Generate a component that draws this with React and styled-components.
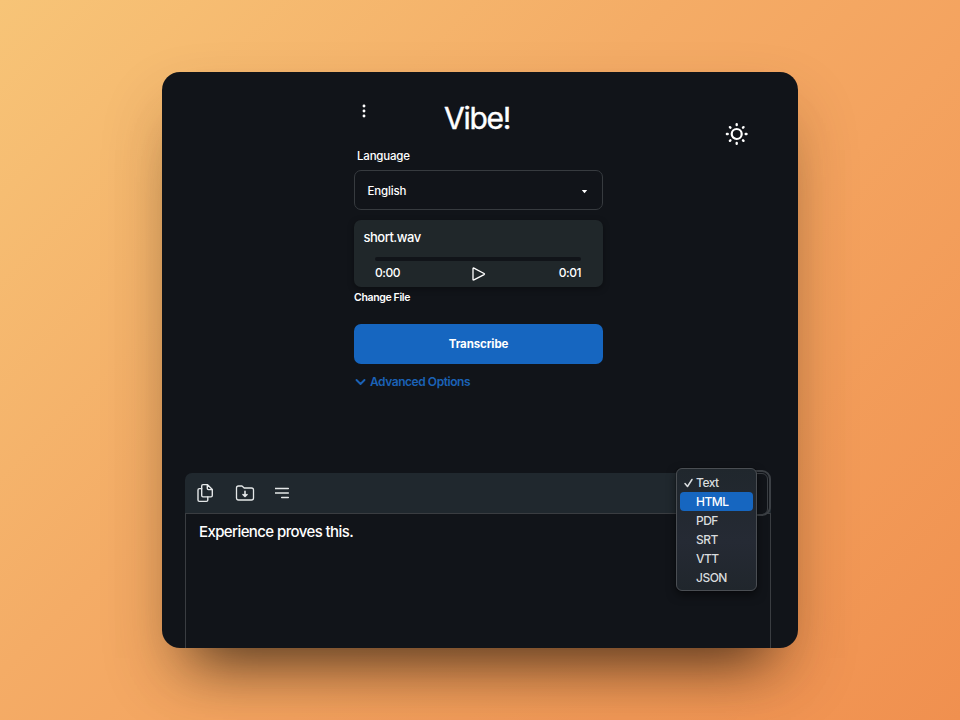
import React from "react";
import styled, { createGlobalStyle } from "styled-components";

const GlobalStyle = createGlobalStyle`
  * { box-sizing: border-box; }
  body { margin: 0; font-family: Inter, "Liberation Sans", sans-serif; color: #fff; }
  button { font: inherit; border: 0; background: none; padding: 0; color: inherit; }
`;

const Backdrop = styled.div`
  width: 960px;
  height: 720px;
  display: grid;
  place-items: center;
  overflow: hidden;
  background: linear-gradient(135deg, #f7c477 0%, #f4ac66 40%, #f4a35f 60%, #f0904f 100%);
`;

const Window = styled.main`
  position: relative;
  width: 636px;
  height: 576px;
  padding: 0 27px 0 23px;
  display: flex;
  flex-direction: column;
  border-radius: 18px;
  background: #111419;
  overflow: hidden;
`;

const WindowShadow = styled.div`
  border-radius: 18px;
  box-shadow: 0 44px 54px -34px rgba(0, 0, 0, 0.62), 0 32px 64px rgba(60, 25, 0, 0.19);
`;

const Form = styled.section`
  width: 249px;
  height: 401px;
  margin-left: 169px;
  padding-top: 28px;
  display: flex;
  flex-direction: column;
  flex: none;
`;

const Heading = styled.header`
  display: grid;
  grid-template-columns: 20px 1fr 23px;
  height: 46px;
`;

const Title = styled.h1`
  margin: 0;
  text-align: center;
  font-size: 30px;
  font-weight: 400;
  line-height: 36px;
  letter-spacing: -1.3px;
  -webkit-text-stroke: 0.4px #fff;
`;

const DotsButton = styled.button`
  height: 22px;
  display: grid;
  place-items: center;
`;

const ThemeButton = styled.button`
  position: absolute;
  left: 563px;
  top: 50px;
  width: 24px;
  height: 24px;
`;

const Label = styled.label`
  height: 24px;
  padding: 2px 0 0 3px;
  font-size: 11.5px;
  font-weight: 500;
  line-height: 16px;
  letter-spacing: -0.2px;
`;

const LanguageSelect = styled.div`
  height: 40px;
  padding: 2px 14px 0 12.5px;
  display: flex;
  align-items: center;
  justify-content: space-between;
  border: 1px solid #373b3f;
  border-radius: 7px;
  font-size: 11.5px;
  font-weight: 500;
  letter-spacing: -0.15px;
`;

const Player = styled.div`
  height: 67px;
  margin-top: 10px;
  padding: 8px 22px 0 21px;
  border-radius: 7px;
  background: #20272a;
  box-shadow: 0 2px 6px rgba(0, 0, 0, 0.35);
`;

const FileName = styled.div`
  margin-left: -11.5px;
  font-size: 13px;
  font-weight: 500;
  line-height: 18px;
  letter-spacing: -0.5px;
`;

const Track = styled.div`
  height: 4px;
  margin-top: 11px;
  border-radius: 2px;
  background: #111419;
`;

const Times = styled.div`
  display: flex;
  justify-content: space-between;
  margin-top: 3px;
  font-size: 12px;
  font-weight: 500;
  line-height: 17px;
  letter-spacing: -0.5px;
`;

const PlayButton = styled.button`
  width: 16px;
  height: 20px;
`;

const ChangeFile = styled.button`
  align-self: flex-start;
  margin-top: 2.5px;
  height: 16px;
  font-size: 10.5px;
  font-weight: 600;
  line-height: 16px;
  letter-spacing: -0.35px;
`;

const Transcribe = styled.button`
  height: 40px;
  flex: none;
  margin-top: 18.5px;
  border-radius: 7px;
  background: #1666c0;
  font-size: 11.5px;
  font-weight: 700;
  letter-spacing: -0.1px;
`;

const Advanced = styled.button`
  align-self: flex-start;
  display: flex;
  align-items: center;
  gap: 4px;
  margin-top: 9px;
  padding-left: 1px;
  color: #1b62b6;
  font-size: 12px;
  font-weight: 600;
  line-height: 17px;
  letter-spacing: -0.45px;
`;

const Result = styled.section`
  flex: 1;
  display: flex;
  flex-direction: column;
`;

const Toolbar = styled.div`
  position: relative;
  height: 40px;
  flex: none;
  display: flex;
  align-items: center;
  gap: 20px;
  padding-left: 10px;
  border-radius: 7px 7px 0 0;
  background: #20282e;
`;

const ToolButton = styled.button`
  width: 20px;
  height: 20px;
  color: #e4e7e8;
`;

const Transcript = styled.div`
  flex: 1;
  padding: 8px 13px;
  border: solid #3a3d41;
  border-width: 1px 1px 0;
  font-size: 15px;
  font-weight: 500;
  line-height: 20px;
  letter-spacing: -0.6px;
`;

const FormatSelect = styled.div`
  position: absolute;
  right: 0;
  top: -3px;
  width: 94px;
  height: 46px;
  border: 2px solid #3c4045;
  border-radius: 9px;
  background: #111419;
  padding: 1px;
  &::after {
    content: "";
    display: block;
    height: 100%;
    border: 1px solid #3c4045;
    border-radius: 6px;
  }
`;

const Menu = styled.ul`
  position: absolute;
  left: 491px;
  top: -5px;
  width: 81px;
  height: 123px;
  margin: 0;
  padding: 4px 3px;
  list-style: none;
  border: 1px solid #4a4e53;
  border-radius: 6px;
  background: linear-gradient(#20272d, #252a34 60%, #20262c);
  box-shadow: 0 0 1px #000, 0 4px 10px rgba(0, 0, 0, 0.5);
`;

const MenuItem = styled.li`
  height: 19px;
  display: grid;
  grid-template-columns: 16px 1fr;
  align-items: center;
  border-radius: 4px;
  font-size: 12px;
  font-weight: 500;
  line-height: 19px;
  letter-spacing: -0.5px;
  color: ${(p) => (p.$active ? "#fff" : "#d9dcde")};
  background: ${(p) => (p.$active ? "#1666c0" : "transparent")};
`;

const Icon = styled.svg`
  display: block;
  fill: none;
  stroke: currentColor;
  stroke-linecap: round;
  stroke-linejoin: round;
`;

const formats = ["Text", "HTML", "PDF", "SRT", "VTT", "JSON"];

export default function App() {
  return (
    <Backdrop>
      <GlobalStyle />
      <WindowShadow>
        <Window>
          <ThemeButton aria-label="Theme">
            <Icon width="24" height="24" viewBox="0 0 24 24" strokeWidth="2.200">
              <circle cx="11.7" cy="12" r="5" />
              <path
                strokeWidth="2.4"
                d="M11.7 2.2v.8M11.7 21v.8M1.900 12h.8M20.700 12h.8M4.900 5.200l.5.5M18 18.300l.5.5M4.900 18.800l.5-.5M18 5.700l.5-.5"
              />
            </Icon>
          </ThemeButton>
          <Form>
            <Heading>
              <DotsButton aria-label="Menu">
                <Icon width="4" height="16" viewBox="0 0 4 16" strokeWidth="2.9">
                  <path d="M2 3h.01M2 8h.01M2 13h.01" />
                </Icon>
              </DotsButton>
              <Title>Vibe!</Title>
            </Heading>
            <Label>Language</Label>
            <LanguageSelect>
              English
              <Icon width="7" height="5" viewBox="0 0 7 5" strokeWidth="0">
                <path d="M.8 1h5.400L3.500 4.300z" fill="#fff" />
              </Icon>
            </LanguageSelect>
            <Player>
              <FileName>short.wav</FileName>
              <Track />
              <Times>
                <span>0:00</span>
                <PlayButton aria-label="Play">
                  <Icon width="16" height="20" viewBox="0 0 16 20" strokeWidth="1.3">
                    <path d="M2 4.600v10.800q0 .9.9.4l10.200-5.200q.8-.6 0-1.100L2.900 4.100Q2 3.700 2 4.600z" />
                  </Icon>
                </PlayButton>
                <span>0:01</span>
              </Times>
            </Player>
            <ChangeFile>Change File</ChangeFile>
            <Transcribe>Transcribe</Transcribe>
            <Advanced>
              <Icon width="11" height="8" viewBox="0 0 11 8" strokeWidth="1.9">
                <path d="M1.500 2l4 4 4-4" />
              </Icon>
              Advanced Options
            </Advanced>
          </Form>
          <Result>
            <Toolbar>
              <ToolButton aria-label="Copy">
                <Icon width="20" height="20" viewBox="0 0 20 20" strokeWidth="1.4">
                  <path d="M12.300 1.600H8q-1.300 0-1.300 1.300v9.700q0 1.300 1.300 1.300h8q1.300 0 1.300-1.300V6.600zM12.300 1.800v3.700q0 1.100 1.100 1.100h3.700" />
                  <path d="M6.700 5.600H4.300Q3 5.600 3 6.900v10.200q0 1.300 1.300 1.300h7.200q1.300 0 1.300-1.300v-3.100" />
                </Icon>
              </ToolButton>
              <ToolButton aria-label="Save">
                <Icon width="20" height="20" viewBox="0 0 20 20" strokeWidth="1.3">
                  <path d="M1.500 5Q1.500 3 3.500 3H7l2.200 2h7.300q2 0 2 2v8q0 2-2 2h-13q-2 0-2-2z" />
                  <path strokeWidth="1.6" d="M10 8.200v5M8 11.500l2 2 2-2" />
                </Icon>
              </ToolButton>
              <ToolButton aria-label="Alignment">
                <Icon width="20" height="20" viewBox="0 0 20 20" strokeWidth="1.5">
                  <path d="M0 5.500h13.300M0 10h13.300M6.700 14.500h6.600" />
                </Icon>
              </ToolButton>
              <FormatSelect />
              <Menu>
                {formats.map((name) => (
                  <MenuItem key={name} $active={name === "HTML"}>
                    <span>
                      {name === "Text" && (
                        <Icon width="16" height="12" viewBox="0 0 16 12" strokeWidth="1.5">
                          <path d="M5 6.500l2.500 3L12 2.500" />
                        </Icon>
                      )}
                    </span>
                    {name}
                  </MenuItem>
                ))}
              </Menu>
            </Toolbar>
            <Transcript>Experience proves this.</Transcript>
          </Result>
        </Window>
      </WindowShadow>
    </Backdrop>
  );
}
